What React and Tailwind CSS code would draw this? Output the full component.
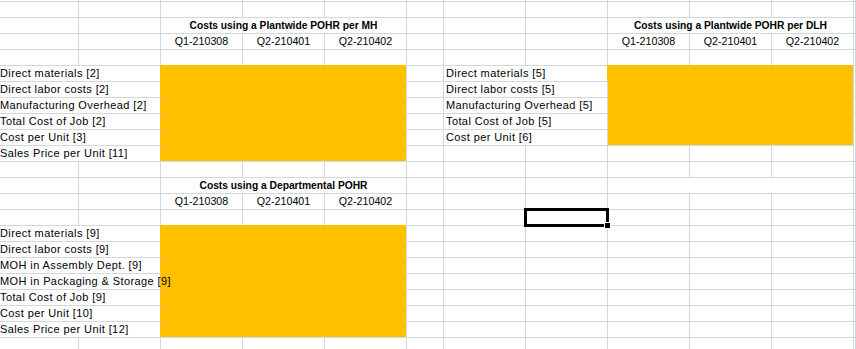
const LINE = 'border-[#d0d7e5]';

const spanCls = { 1: 'col-span-1', 2: 'col-span-2', 3: 'col-span-3' };
const rowSpanCls = { 5: 'row-span-5', 6: 'row-span-6', 7: 'row-span-7' };

const E = (n) => Array.from({ length: n }, () => ({ kind: 'empty' }));
const title = (text) => ({ kind: 'title', span: 3, text });
const merged = () => ({ kind: 'merged', span: 3 });
const q = (text) => ({ kind: 'q', text });
const label = (text, side) => ({ kind: 'label', span: 2, text, side });
const orange = (rows) => ({ kind: 'orange', span: 3, rows });

const quarters = ['Q1-210308', 'Q2-210401', 'Q2-210402'];

const leftTop = [
  'Direct materials [2]',
  'Direct labor costs [2]',
  'Manufacturing Overhead [2]',
  'Total Cost of Job [2]',
  'Cost per Unit [3]',
  'Sales Price per Unit [11]',
];

const rightTop = [
  'Direct materials [5]',
  'Direct labor costs [5]',
  'Manufacturing Overhead [5]',
  'Total Cost of Job [5]',
  'Cost per Unit [6]',
];

const leftBottom = [
  'Direct materials [9]',
  'Direct labor costs [9]',
  'MOH in Assembly Dept. [9]',
  'MOH in Packaging & Storage [9]',
  'Total Cost of Job [9]',
  'Cost per Unit [10]',
  'Sales Price per Unit [12]',
];

function buildCells() {
  const rows = [];
  rows.push(E(12)); // r0 sliver
  rows.push(E(12)); // r1
  rows.push([...E(2), title('Costs using a Plantwide POHR per MH'), ...E(3), title('Costs using a Plantwide POHR per DLH'), ...E(1)]);
  rows.push([...E(2), ...quarters.map(q), ...E(3), ...quarters.map(q), ...E(1)]);
  rows.push(E(12)); // r4

  // r5 - r10
  for (let i = 0; i < 6; i++) {
    const r = [label(leftTop[i], 'left')];
    if (i === 0) r.push(orange(6));
    r.push(...E(1));
    if (i < 5) {
      r.push(label(rightTop[i], 'right'));
      if (i === 0) r.push(orange(5));
      r.push(...E(1));
    } else {
      r.push(...E(6));
    }
    rows.push(r);
  }

  rows.push(E(12)); // r11
  rows.push([...E(2), title('Costs using a Departmental POHR'), ...E(3), merged(), ...E(1)]);
  rows.push([...E(2), ...quarters.map(q), ...E(7)]);
  rows.push([...E(7), { kind: 'selected' }, ...E(4)]);

  // r15 - r21
  leftBottom.forEach((t, i) => {
    const r = [label(t, 'left')];
    if (i === 0) r.push(orange(7));
    r.push(...E(7));
    rows.push(r);
  });

  rows.push(E(12)); // r22
  return rows.flat();
}

function Cell({ cell }) {
  const span = spanCls[cell.span || 1];

  if (cell.kind === 'orange') {
    return (
      <div
        className={`${span} ${rowSpanCls[cell.rows]} -ml-px -mt-px bg-[#ffc000] border-r border-b ${LINE}`}
      />
    );
  }

  if (cell.kind === 'label') {
    return (
      <div className={`${span} border-b ${LINE} ${cell.side === 'right' ? 'border-r pl-[2px]' : ''}`}>
        <span className="relative z-10 block whitespace-nowrap text-[11px] leading-[15px] tracking-[0.4px] text-black">
          {cell.text}
        </span>
      </div>
    );
  }

  if (cell.kind === 'title') {
    return (
      <div className={`${span} border-r border-b ${LINE} text-center`}>
        <span className="block whitespace-nowrap text-[10.25px] font-bold leading-[15px] text-black">
          {cell.text}
        </span>
      </div>
    );
  }

  if (cell.kind === 'q') {
    return (
      <div className={`${span} border-r border-b ${LINE} text-center`}>
        <span className="block whitespace-nowrap text-[10.7px] leading-[15px] text-black">{cell.text}</span>
      </div>
    );
  }

  if (cell.kind === 'selected') {
    return (
      <div className={`${span} relative border-r border-b ${LINE}`}>
        <div className="absolute -inset-0.5 z-20 border-[3px] border-black" />
        <div className="absolute -right-1 -bottom-1 z-30 h-[7px] w-[7px] border border-white bg-black" />
      </div>
    );
  }

  // empty or merged-empty
  return <div className={`${span} border-r border-b ${LINE}`} />;
}

export default function App() {
  const cells = buildCells();

  return (
    <div className="h-[349px] w-[856px] overflow-hidden bg-white font-['Liberation_Sans',Arial,sans-serif]">
      <div className="grid grid-cols-[79px_82px_82px_82px_82px_37px_82px_82px_82px_82px_82px_1fr] grid-rows-[2px_repeat(22,16px)]">
        {cells.map((cell, i) => (
          <Cell key={i} cell={cell} />
        ))}
      </div>
    </div>
  );
}
